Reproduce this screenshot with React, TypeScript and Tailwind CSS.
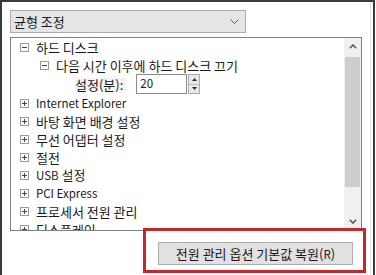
import React from 'react'

const font = { fontFamily: '"Noto Sans CJK KR", "Noto Sans", sans-serif' }

// Latin runs sit a bit smaller than Hangul, like Malgun Gothic does
function Txt({ children }: { children: string }) {
  const parts = children.split(/([A-Za-z0-9]+(?: [A-Za-z0-9]+)*)/)
  return (
    <>
      {parts.map((p, i) =>
        /^[A-Za-z0-9]/.test(p) ? (
          <span key={i} className="text-[11.5px]">{p}</span>
        ) : (
          <span key={i}>{p}</span>
        )
      )}
    </>
  )
}

function ExpandBox({ open }: { open: boolean }) {
  return (
    <svg width="9" height="9" viewBox="0 0 9 9" className="shrink-0">
      <rect x="0.5" y="0.5" width="8" height="8" fill="#fff" stroke="#9a9a9a" />
      <line x1="2" y1="4.5" x2="7" y2="4.5" stroke="#444" />
      {!open && <line x1="4.5" y1="2" x2="4.5" y2="7" stroke="#444" />}
    </svg>
  )
}

function TreeRow({ label, level = 0, open = false }: { label: string; level?: number; open?: boolean }) {
  return (
    <div className={`flex items-center h-[18px] gap-[7px] ${level === 0 ? 'pl-[9px]' : 'pl-[29px]'}`}>
      <ExpandBox open={open} />
      <span className="whitespace-nowrap leading-none">
        <Txt>{label}</Txt>
      </span>
    </div>
  )
}

const items = [
  'Internet Explorer',
  '바탕 화면 배경 설정',
  '무선 어댑터 설정',
  '절전',
  'USB 설정',
  'PCI Express',
  '프로세서 전원 관리',
  '디스플레이',
]

export default function App() {
  return (
    <div
      className="relative w-[375px] h-[275px] bg-white border-l-2 border-t-2 border-r-2 border-[#3a3a3a] text-[13px] text-[#1a1a1a]"
      style={font}
    >
      <div className="h-full w-[369px] border-r border-[#e2e2e2] pl-2 pt-2">
        {/* Plan select */}
        <div className="flex items-center justify-between w-[236px] h-[23px] bg-[#e5e5e5] border border-[#acacac] pl-[3px] pr-[6px]">
          <span className="leading-none">균형 조정</span>
          <svg width="9" height="5" viewBox="0 0 9 5">
            <path d="M0.5 0.5 L4.5 4.5 L8.5 0.5" fill="none" stroke="#555" strokeWidth="1" />
          </svg>
        </div>

        {/* Settings tree */}
        <div className="flex mt-[4px] w-[352px] h-[194px] border border-[#828282]">
          <div className="flex-1 overflow-hidden">
            <TreeRow label="하드 디스크" open />
            <TreeRow label="다음 시간 이후에 하드 디스크 끄기" level={1} open />
            <div className="flex items-center h-[20px] pl-[64px]">
              <span className="leading-none bg-[#f3f3f3] pr-[3px]">설정(분):</span>
              <div className="flex ml-[10px] h-[20px]">
                <div className="w-[51px] border border-[#8a8a8a] bg-white pl-[3px] flex items-center leading-none text-[11.5px]">20</div>
                <div className="flex flex-col w-[12px] ml-[1px] border border-[#acacac] bg-[#e8e8e8]">
                  <div className="flex-1 flex items-center justify-center border-b border-[#c0c0c0]">
                    <svg width="5" height="3" viewBox="0 0 5 3"><path d="M0 3 L2.5 0 L5 3Z" fill="#333" /></svg>
                  </div>
                  <div className="flex-1 flex items-center justify-center">
                    <svg width="5" height="3" viewBox="0 0 5 3"><path d="M0 0 L2.5 3 L5 0Z" fill="#333" /></svg>
                  </div>
                </div>
              </div>
            </div>
            {items.map(label => (
              <TreeRow key={label} label={label} />
            ))}
          </div>

          {/* Scrollbar */}
          <div className="flex flex-col w-[17px] bg-[#f0f0f0]">
            <div className="h-[17px] flex items-center justify-center">
              <svg width="8" height="5" viewBox="0 0 8 5">
                <path d="M0.8 4.2 L4 1 L7.2 4.2" fill="none" stroke="#555" strokeWidth="1.6" />
              </svg>
            </div>
            <div className="mt-[2px] mx-[1px] h-[130px] bg-[#cdcdcd]" />
            <div className="flex-1" />
            <div className="h-[17px] flex items-center justify-center">
              <svg width="8" height="5" viewBox="0 0 8 5">
                <path d="M0.8 0.8 L4 4 L7.2 0.8" fill="none" stroke="#555" strokeWidth="1.6" />
              </svg>
            </div>
          </div>
        </div>

        {/* Restore defaults */}
        <div className="flex justify-end w-[352px] pr-[9px] mt-[11px]">
          <button className="w-[195px] h-[23px] bg-[#e1e1e1] border border-[#adadad] leading-none">
            <Txt>전원 관리 옵션 기본값 복원(R)</Txt>
          </button>
        </div>
      </div>

      {/* Highlight */}
      <div className="absolute left-[141px] top-[226px] w-[223px] h-[45px] border-[3px] border-[#c8262d]" />
    </div>
  )
}
